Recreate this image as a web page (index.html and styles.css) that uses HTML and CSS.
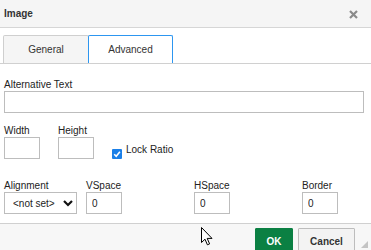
FILE: index.html
```html
<!DOCTYPE html>
<html lang="en">
<head>
  <meta charset="UTF-8" />
  <title>Image</title>
  <link rel="stylesheet" href="styles.css">
</head>
<body>

<div class="dialog">
  <div class="dialog-head">
    <span class="dialog-title">Image</span>
    <svg class="close" width="9" height="9" viewBox="0 0 9 9">
      <path d="M1 1 L8 8 M8 1 L1 8" stroke="#8a8a8a" stroke-width="2.2" />
    </svg>
  </div>

  <div class="tabs">
    <div class="tab">General</div>
    <div class="tab active">Advanced</div>
  </div>

  <div class="panel">
    <div class="field">
      <label>Alternative Text</label>
      <input type="text" class="wide">
    </div>

    <div class="row">
      <div class="field">
        <label>Width</label>
        <input type="text" class="small">
      </div>
      <div class="field">
        <label>Height</label>
        <input type="text" class="small">
      </div>
      <div class="lock">
        <span class="check">
          <svg width="10" height="10" viewBox="0 0 10 10">
            <path d="M2.2 5.2 L4.2 7.2 L7.9 2.8" fill="none" stroke="#fff" stroke-width="1.6" />
          </svg>
        </span>
        <span>Lock Ratio</span>
      </div>
    </div>

    <div class="grid-row">
      <div class="field">
        <label>Alignment</label>
        <div class="select-wrap">
          <select>
            <option>&lt;not set&gt;</option>
          </select>
          <svg class="chevron" width="10" height="7" viewBox="0 0 10 7">
            <path d="M1 1 L5 5 L9 1" fill="none" stroke="#111" stroke-width="2.2" />
          </svg>
        </div>
      </div>
      <div class="field">
        <label>VSpace</label>
        <input type="text" class="small" value="0">
      </div>
      <div class="field">
        <label>HSpace</label>
        <input type="text" class="small" value="0">
      </div>
      <div class="field">
        <label>Border</label>
        <input type="text" class="small" value="0">
      </div>
    </div>
  </div>

  <div class="dialog-foot">
    <button class="btn ok">OK</button>
    <button class="btn cancel">Cancel</button>
  </div>

  <svg class="resize" width="7" height="7" viewBox="0 0 7 7">
    <path d="M7 0 L7 7 L0 7 Z" fill="#c4c4c4" />
  </svg>

  <svg class="cursor" width="12" height="19" viewBox="0 0 12 19">
    <path d="M0.5 0.5 L0.5 15.5 L4 12.2 L6.4 17.8 L8.6 16.9 L6.2 11.4 L11 11.4 Z" fill="#fff" stroke="#000" stroke-width="1" stroke-linejoin="round" />
  </svg>
</div>

</body>
</html>
```

FILE: styles.css
```css
body {
  margin: 0;
  font-family: "Liberation Sans", Arial, sans-serif;
  font-size: 10px;
  color: #222;
  background: #fff;
  overflow: hidden;
}

.dialog {
  position: relative;
  width: 371px;
  height: 250px;
  overflow: hidden;
}

.dialog-head {
  height: 27px;
  background: #f5f5f5;
  border-bottom: 1px solid #d6d6d6;
  display: flex;
  align-items: center;
  justify-content: space-between;
  padding: 0 13px 0 4px;
}

.dialog-title {
  font-weight: bold;
  color: #333;
}

.close {
  margin-top: 1px;
}

.tabs {
  display: flex;
  padding: 7px 0 0 3px;
  border-bottom: 1px solid #d0d0d0;
}

.tab {
  width: 84px;
  height: 27px;
  display: flex;
  align-items: center;
  justify-content: center;
  background: #f5f5f5;
  border: 1px solid #cfcfcf;
  border-bottom: none;
  border-radius: 2px 2px 0 0;
  color: #333;
}

.tab.active {
  width: 83px;
  background: #fff;
  border-color: #2d96f0;
  margin-left: -1px;
}

.panel {
  padding: 14px 4px 0 4px;
}

.field {
  display: flex;
  flex-direction: column;
  align-items: flex-start;
}

.field label {
  line-height: 13px;
}

input, select {
  font-family: "Liberation Sans", Arial, sans-serif;
  font-size: 10px;
  color: #222;
  box-sizing: border-box;
  height: 22px;
  margin: 0;
  border: 1px solid #bdbdbd;
  border-radius: 0;
  background: #fff;
  outline: none;
}

input {
  padding: 0 5px;
}

.wide {
  width: 360px;
}

.small {
  width: 36px;
}

.row {
  display: flex;
  gap: 18px;
  margin-top: 11px;
}

.lock {
  display: flex;
  align-items: flex-start;
  gap: 4px;
  align-self: flex-end;
  line-height: 13px;
}

.check {
  width: 10px;
  height: 10px;
  margin-top: 6px;
  background: #1a7fe8;
  border-radius: 1px;
  display: flex;
}

.grid-row {
  display: grid;
  grid-template-columns: 82px 108px 108px auto;
  margin-top: 20px;
}

.select-wrap {
  position: relative;
}

select {
  width: 73px;
  appearance: none;
  -webkit-appearance: none;
  padding: 0 0 0 8px;
}

.chevron {
  position: absolute;
  right: 4px;
  top: 8px;
  pointer-events: none;
}

.dialog-foot {
  margin-top: 9px;
  height: 30px;
  background: #f7f7f7;
  border-top: 1px solid #d0d0d0;
  display: flex;
  justify-content: flex-end;
  align-items: flex-start;
  gap: 5px;
  padding: 4px 16px 0 0;
}

.btn {
  font-family: "Liberation Sans", Arial, sans-serif;
  font-size: 10px;
  font-weight: bold;
  height: 26px;
  border-radius: 1px;
  cursor: pointer;
}

.ok {
  width: 38px;
  background: #0b8043;
  border: 1px solid #0b8043;
  color: #fff;
}

.cancel {
  width: 57px;
  background: #f3f3f3;
  border: 1px solid #bdbdbd;
  color: #333;
}

.resize {
  position: absolute;
  right: 3px;
  bottom: 2px;
}

.cursor {
  position: absolute;
  left: 201px;
  top: 227px;
}
```
